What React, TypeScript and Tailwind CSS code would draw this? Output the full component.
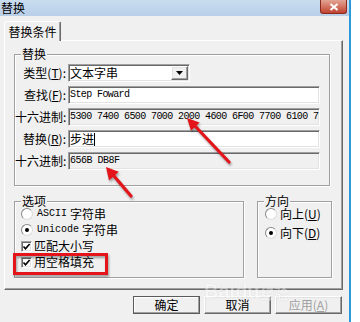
import React from "react";

const sunken =
  "border border-t-[#a0a0a0] border-l-[#a0a0a0] border-r-white border-b-white shadow-[inset_1px_1px_0_#696969,inset_-1px_-1px_0_#e3e3e3]";
const raised =
  "border border-t-white border-l-white border-r-[#696969] border-b-[#696969] shadow-[inset_-1px_-1px_0_#a0a0a0,inset_1px_1px_0_#e3e3e3]";
const etched = "border border-[#a0a0a0] shadow-[inset_1px_1px_0_#ffffff,1px_1px_0_#ffffff]";
const mono = "font-['Liberation_Mono',monospace]";

function Row({ label, children }: { label: React.ReactNode; children: React.ReactNode }) {
  return (
    <div className="flex items-center h-[18px]">
      <div className="w-[51px] text-right text-[12px] leading-[18px] whitespace-nowrap">{label}</div>
      <div className="ml-[2px]">{children}</div>
    </div>
  );
}

function Radio({ checked }: { checked?: boolean }) {
  return (
    <div className="w-[12px] h-[12px] rounded-full border border-t-[#8a8a8a] border-l-[#8a8a8a] border-r-[#dcdcdc] border-b-[#dcdcdc] bg-white flex items-center justify-center shrink-0">
      {checked && <div className="w-[4px] h-[4px] rounded-full bg-black" />}
    </div>
  );
}

function Check() {
  return (
    <div className={`w-[11px] h-[11px] bg-white flex items-center justify-center shrink-0 ${sunken}`}>
      <svg width="9" height="9" viewBox="0 0 9 9">
        <path d="M1.5 4.5 L3.5 6.7 L7.6 2" stroke="#000" strokeWidth="1.6" fill="none" />
      </svg>
    </div>
  );
}

export default function App() {
  return (
    <div className="w-[360px] h-[322px] bg-white relative overflow-hidden font-['Noto_Sans_CJK_SC',sans-serif] text-black">
      <div className="w-[351px] h-[322px] flex flex-col bg-[#f0f0f0] border-r-2 border-[#2b9ad8]">
        {/* title bar */}
        <div className="h-[16px] flex items-start justify-between bg-gradient-to-b from-[#c9dcf0] to-[#b9cfe8] pl-[1px] pr-[2px] shrink-0">
          <span className="text-[12px] leading-[15px]">替换</span>
          <div className="w-[27px] h-[14px] rounded-b-[3px] border border-[#8b2b1f] border-t-0 bg-gradient-to-b from-[#e3a393] to-[#c0412f] flex items-center justify-center">
            <svg width="10" height="8" viewBox="0 0 10 8">
              <path d="M1.5 1 L8.5 7 M8.5 1 L1.5 7" stroke="#ffffff" strokeWidth="2" />
            </svg>
          </div>
        </div>

        {/* tab */}
        <div className="pt-[5px] shrink-0">
          <div className="ml-[4px] w-[57px] h-[20px] -mb-[1px] relative z-10 bg-[#f0f0f0] border-t border-l border-white border-r border-r-[#696969] rounded-t-[2px] shadow-[inset_-1px_0_0_#a0a0a0] flex items-center justify-center text-[12px] leading-[14px]">
            替换条件
          </div>
        </div>

        {/* panel */}
        <div className="ml-[4px] w-[339px] h-[250px] shrink-0 pl-[9px] pt-[13px] border border-t-white border-l-white border-r-[#696969] border-b-[#696969] shadow-[inset_-1px_-1px_0_#a0a0a0]">
          {/* replace group */}
          <div className={`relative w-[316px] pt-[9px] pb-[15px] ${etched}`}>
            <span className="absolute left-[6px] -top-[8px] px-[1px] bg-[#f0f0f0] text-[12px] leading-[14px]">替换</span>
            <div className="flex flex-col gap-[4px]">
              <Row label={<>类型(<u>T</u>):</>}>
                <div className={`w-[122px] h-[18px] bg-white flex items-center justify-between pl-[1px] pr-[1px] ${sunken}`}>
                  <span className="text-[12px] leading-[14px]">文本字串</span>
                  <div className={`w-[17px] h-[14px] bg-[#f0f0f0] flex items-center justify-center ${raised}`}>
                    <svg width="7" height="4" viewBox="0 0 7 4">
                      <path d="M0 0 H7 L3.5 4 Z" fill="#000" />
                    </svg>
                  </div>
                </div>
              </Row>
              <Row label={<>查找(<u>F</u>):</>}>
                <div className={`w-[252px] h-[18px] bg-white flex items-center pl-[1px] ${sunken}`}>
                  <span className={`${mono} text-[10px] tracking-[-0.6px] leading-[14px] whitespace-pre`}>Step Foward</span>
                </div>
              </Row>
              <Row label="十六进制:">
                <div className={`w-[252px] h-[18px] bg-[#f0f0f0] flex items-center pl-[1px] overflow-hidden ${sunken}`}>
                  <span className={`${mono} text-[10px] tracking-[-0.6px] leading-[14px] whitespace-pre`}>
                    5300 7400 6500 7000 2000 4600 6F00 7700 6100 7200 6400
                  </span>
                </div>
              </Row>
              <Row label={<>替换(<u>R</u>):</>}>
                <div className={`w-[252px] h-[18px] bg-white flex items-center pl-[1px] ${sunken}`}>
                  <span className="text-[12px] leading-[14px]">步进</span>
                  <span className="w-[1px] h-[13px] bg-black" />
                </div>
              </Row>
              <Row label="十六进制:">
                <div className={`w-[252px] h-[18px] bg-[#f0f0f0] flex items-center pl-[1px] ${sunken}`}>
                  <span className={`${mono} text-[10px] tracking-[-0.5px] leading-[14px] whitespace-pre`}>656B DB8F</span>
                </div>
              </Row>
            </div>
          </div>

          {/* options + direction */}
          <div className="flex mt-[15px] gap-[13px]">
            <div className={`relative w-[230px] h-[77px] pl-[6px] pt-[4px] ${etched}`}>
              <span className="absolute left-[6px] -top-[8px] px-[1px] bg-[#f0f0f0] text-[12px] leading-[14px]">选项</span>
              <div className="flex items-center h-[16px]">
                <Radio />
                <span className={`ml-[4px] ${mono} text-[10px] leading-[14px]`}>ASCII</span>
                <span className="ml-[3px] text-[12px] leading-[14px]">字符串</span>
              </div>
              <div className="flex items-center h-[16px]">
                <Radio checked />
                <span className={`ml-[4px] ${mono} text-[10px] leading-[14px]`}>Unicode</span>
                <span className="ml-[3px] text-[12px] leading-[14px]">字符串</span>
              </div>
              <div className="flex items-center h-[16px]">
                <Check />
                <span className="ml-[2px] text-[12px] leading-[14px]">匹配大小写</span>
              </div>
              <div className="flex items-center h-[16px]">
                <Check />
                <span className="ml-[2px] text-[12px] leading-[14px]">用空格填充</span>
              </div>
            </div>
            <div className={`relative w-[75px] h-[77px] pl-[7px] pt-[4px] flex flex-col gap-[3px] ${etched}`}>
              <span className="absolute left-[6px] -top-[8px] px-[1px] bg-[#f0f0f0] text-[12px] leading-[14px]">方向</span>
              <div className="flex items-center h-[16px]">
                <Radio />
                <span className="ml-[3px] text-[12px] leading-[14px]">向上(<u>U</u>)</span>
              </div>
              <div className="flex items-center h-[16px]">
                <Radio checked />
                <span className="ml-[3px] text-[12px] leading-[14px]">向下(<u>D</u>)</span>
              </div>
            </div>
          </div>
        </div>

        {/* buttons */}
        <div className="flex justify-end gap-[4px] pr-[7px] mt-[6px] shrink-0">
          <div className="w-[67px] h-[18px] border border-[#5a5a5a] shadow-[inset_-1px_-1px_0_#a0a0a0,inset_1px_1px_0_#ffffff] flex items-center justify-center text-[12px] leading-[14px]">
            确定
          </div>
          <div className={`w-[67px] h-[18px] flex items-center justify-center text-[12px] leading-[14px] ${raised}`}>取消</div>
          <div className={`w-[67px] h-[18px] flex items-center justify-center text-[12px] leading-[14px] text-[#a0a0a0] ${raised}`}>
            应用(<u>A</u>)
          </div>
        </div>
      </div>

      {/* watermark */}
      <div className="absolute left-[204px] top-[280px] flex items-end opacity-40 pointer-events-none">
        <span className="text-[20px] leading-[22px] font-bold text-white [text-shadow:0_0_1px_#9a9a9a] font-['Liberation_Sans',sans-serif]">
          Bai
        </span>
        <span className="text-[20px] leading-[22px] font-bold text-white [text-shadow:0_0_1px_#9a9a9a] font-['Liberation_Sans',sans-serif]">
          du
        </span>
        <span className="ml-[1px] text-[14px] leading-[18px] font-bold text-white [text-shadow:0_0_1px_#9a9a9a]">经验</span>
      </div>

      {/* annotations */}
      <svg
        className="absolute left-0 top-0 pointer-events-none drop-shadow-[1px_2px_1px_rgba(0,0,0,0.35)]"
        width="360"
        height="322"
        viewBox="0 0 360 322"
      >
        <rect x="14.5" y="254.5" width="92" height="19" fill="none" stroke="#e4141b" strokeWidth="3" />
        <line x1="229" y1="162" x2="195" y2="126" stroke="#e4141b" strokeWidth="3.2" strokeLinecap="round" />
        <polygon points="187,118 199.6,122.5 191,130.7" fill="#e4141b" />
        <line x1="131" y1="196" x2="114" y2="176" stroke="#e4141b" strokeWidth="3.2" strokeLinecap="round" />
        <polygon points="106,167 118.8,171.8 109,180.5" fill="#e4141b" />
      </svg>
    </div>
  );
}
